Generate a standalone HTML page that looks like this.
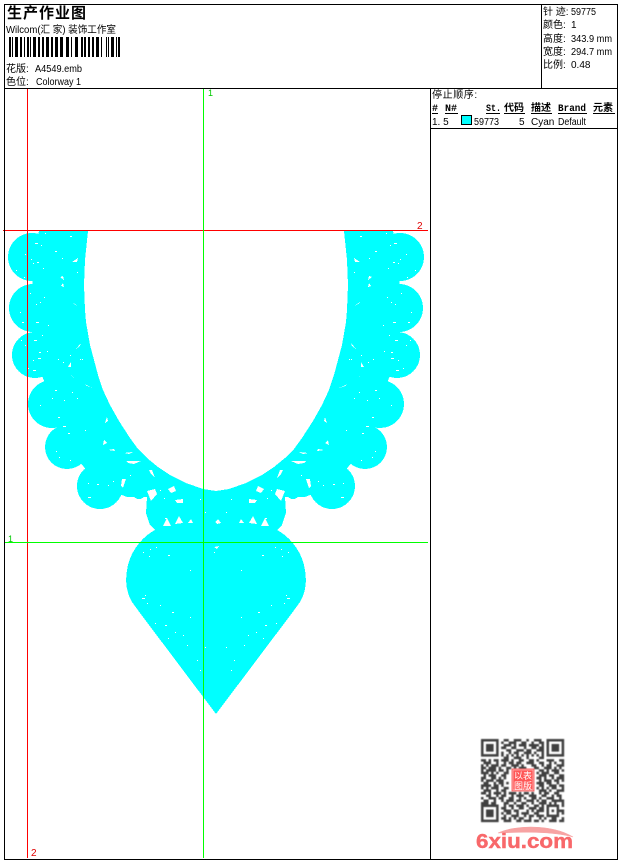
<!DOCTYPE html>
<html><head><meta charset="utf-8"><title>生产作业图</title>
<style>
html,body{margin:0;padding:0;background:#fff;width:620px;height:860px;overflow:hidden}
svg{display:block}
text{font-family:"Liberation Sans","WenQuanYi Zen Hei","Noto Sans CJK SC",sans-serif;font-size:10px;fill:#000}
.h{font-weight:bold}
</style></head><body>
<svg width="620" height="860" viewBox="0 0 620 860" xmlns="http://www.w3.org/2000/svg">
<rect width="620" height="860" fill="#fff"/>

<!-- embroidery shape -->
<g fill="#00ffff" shape-rendering="crispEdges">
<circle cx="32" cy="257" r="24"/><circle cx="33" cy="308" r="24"/><circle cx="35" cy="355" r="23"/>
<circle cx="52" cy="404" r="24"/><circle cx="67" cy="447" r="22"/><circle cx="100" cy="486" r="23"/>
<circle cx="400" cy="257" r="24"/><circle cx="399" cy="308" r="24"/><circle cx="397" cy="355" r="23"/>
<circle cx="380" cy="404" r="24"/><circle cx="365" cy="447" r="22"/><circle cx="332" cy="486" r="23"/>
<circle cx="139" cy="492" r="7"/><circle cx="293" cy="492" r="7"/>
<path d="M39 231H88L85 260L84 285L85 310L86 322L90 345L98 375L103 390L110 405L119 421L130 438L138 449L147 458L158 467L170 475L186 483L203 489L216 491L229 489L246 483L262 475L274 467L285 458L294 449L302 438L313 421L322 405L329 390L334 375L342 345L346 322L347 310L348 285L347 260L344 231H393L400 257L399 308L397 355L380 404L365 447L332 486L305 497L285 497L286 513L282 525L277 530C287 535 300 548 304 565C307 578 307 590 300 602L292 613L216 714L140 613L132 602C125 590 125 578 128 565C132 548 145 535 155 530L150 525L146 513L147 497L127 497L100 486L67 447L52 404L35 355L33 308L32 257Z"/>
</g>
<!-- holes, left half and mirrored -->
<g fill="#fff" shape-rendering="crispEdges">
<path d="M72 262L78 258L77 262ZM60 277L63 276L64 280ZM61 286L64 287L63 283ZM72 302L78 306L74 304ZM76 349L81 343L80 346ZM68 367L71 362L71 367ZM70 375L75 378L72 376ZM84 384L93 388L87 386ZM105 423L107 417L108 421ZM103 445L104 440L107 443ZM108 450L114 449L115 451ZM124 453L133 452L129 454ZM126 461L141 461L134 464L128 463ZM149 470L152 470L155 478L151 474ZM122 479L126 479L123 488L121 486ZM147 491L155 489L157 494L151 501L149 496ZM168 489L174 486L176 491L171 493ZM175 500L183 499L183 503L177 503ZM163 526L167 518L171 526ZM175 524L179 516L183 523ZM188 523L191 519L193 523Z"/>
<g transform="matrix(-1 0 0 1 432 0)"><path d="M72 262L78 258L77 262ZM60 277L63 276L64 280ZM61 286L64 287L63 283ZM72 302L78 306L74 304ZM76 349L81 343L80 346ZM68 367L71 362L71 367ZM70 375L75 378L72 376ZM84 384L93 388L87 386ZM105 423L107 417L108 421ZM103 445L104 440L107 443ZM108 450L114 449L115 451ZM124 453L133 452L129 454ZM126 461L141 461L134 464L128 463ZM149 470L152 470L155 478L151 474ZM122 479L126 479L123 488L121 486ZM147 491L155 489L157 494L151 501L149 496ZM168 489L174 486L176 491L171 493ZM175 500L183 499L183 503L177 503ZM163 526L167 518L171 526ZM175 524L179 516L183 523ZM188 523L191 519L193 523Z"/></g>
<path d="M215 522L218 519L221 523L217 524ZM214 547L219 546L217 549Z"/>
</g>
<!-- speckles -->
<g stroke="#fff" stroke-width="1" fill="none" shape-rendering="crispEdges">
<path d="M45 233.5h1M70 236.5h2M35 243.5h3M41 245.5h1M55 251.5h2M25 254.5h1M31 259.5h1M37 262.5h2M62 258.5h1M33 263.5h1M43 268.5h1M77 272.5h1M24 277.5h1M16 270.5h1M30 293.5h1M36 304.5h1M44 297.5h1M40 302.5h1M20 312.5h1M22 322.5h2M36 322.5h3M48 325.5h1M42 335.5h1M34 340.5h3M21 340.5h1M25 345.5h1M39 352.5h2M47 351.5h1M38 358.5h3M33 360.5h1M58 359.5h1M63 362.5h1M80 359.5h1M70 355.5h1M82 359.5h1M28 368.5h1M33 370.5h3M55 390.5h2M52 398.5h1M40 405.5h1M72 392.5h1M64 400.5h1M77 398.5h1M58 417.5h2M63 426.5h3M68 433.5h2M85 430.5h1M56 451.5h1M59 457.5h1M70 460.5h1M88 483.5h1M97 484.5h2M88 497.5h3M108 485.5h1M113 481.5h1M130 475.5h1M160 490.5h1M164 498.5h1M205 512.5h1M165 518.5h2M200 499.5h1M214 552.5h1M143 552.5h1M150 549.5h1M156 547.5h1M149 556.5h1M168 555.5h2M190 570.5h1M145 595.5h1M142 598.5h3M147 603.5h1M160 605.5h1M172 612.5h2M135 607.5h1M190 617.5h1M155 623.5h1M168 638.5h1M175 632.5h1M187 645.5h1M197 660.5h1M200 670.5h1M205 647.5h1M183 635.5h1M165 625.5h2"/>
<g transform="matrix(-1 0 0 1 432 0)"><path d="M45 233.5h1M70 236.5h2M35 243.5h3M41 245.5h1M55 251.5h2M25 254.5h1M31 259.5h1M37 262.5h2M62 258.5h1M33 263.5h1M43 268.5h1M77 272.5h1M24 277.5h1M16 270.5h1M30 293.5h1M36 304.5h1M44 297.5h1M40 302.5h1M20 312.5h1M22 322.5h2M36 322.5h3M48 325.5h1M42 335.5h1M34 340.5h3M21 340.5h1M25 345.5h1M39 352.5h2M47 351.5h1M38 358.5h3M33 360.5h1M58 359.5h1M63 362.5h1M80 359.5h1M70 355.5h1M82 359.5h1M28 368.5h1M33 370.5h3M55 390.5h2M52 398.5h1M40 405.5h1M72 392.5h1M64 400.5h1M77 398.5h1M58 417.5h2M63 426.5h3M68 433.5h2M85 430.5h1M56 451.5h1M59 457.5h1M70 460.5h1M88 483.5h1M97 484.5h2M88 497.5h3M108 485.5h1M113 481.5h1M130 475.5h1M160 490.5h1M164 498.5h1M205 512.5h1M165 518.5h2M200 499.5h1M143 552.5h1M150 549.5h1M156 547.5h1M149 556.5h1M168 555.5h2M190 570.5h1M145 595.5h1M142 598.5h3M147 603.5h1M160 605.5h1M172 612.5h2M135 607.5h1M190 617.5h1M155 623.5h1M168 638.5h1M175 632.5h1M187 645.5h1M197 660.5h1M200 670.5h1M205 647.5h1M183 635.5h1M165 625.5h2"/></g>
</g>

<!-- guide lines -->
<g shape-rendering="crispEdges" stroke-width="1" fill="none">
<path stroke="#ff0000" d="M3 230.5H428M27.5 89V858"/>
<path stroke="#00ff00" d="M5 542.5H428M203.5 89V858"/>
</g>
<text x="208" y="96" style="fill:#00c800;font-size:9px">1</text>
<text x="8" y="542" style="fill:#00c800;font-size:9px">1</text>
<text x="417" y="229" style="fill:#e00000;font-size:10px">2</text>
<text x="31" y="856" style="fill:#e00000;font-size:10px">2</text>

<!-- frame -->
<g stroke="#000" stroke-width="1" fill="none" shape-rendering="crispEdges">
<path d="M4.5 4.5H617.5V859.5H4.5ZM5 88.5H617M541.5 5V88M430.5 89V859M431 128.5H617"/>
</g>

<!-- header left -->
<text x="7" y="18" class="h" style="font-size:15px;letter-spacing:1px">生产作业图</text>
<text x="6" y="33" textLength="110" lengthAdjust="spacingAndGlyphs" style="font-size:10px">Wilcom(汇 家) 装饰工作室</text>
<path shape-rendering="crispEdges" fill="#000" d="M9 37h2v20h-2zM12 37h1v20h-1zM15 37h3v20h-3zM20 37h2v20h-2zM24 37h1v20h-1zM27 37h2v20h-2zM30 37h1v20h-1zM33 37h3v20h-3zM38 37h2v20h-2zM42 37h2v20h-2zM46 37h3v20h-3zM51 37h2v20h-2zM55 37h3v20h-3zM60 37h3v20h-3zM66 37h3v20h-3zM71 37h1v20h-1zM75 37h3v20h-3zM81 37h2v20h-2zM84 37h2v20h-2zM88 37h2v20h-2zM92 37h2v20h-2zM96 37h3v20h-3zM101 37h1v20h-1zM106 37h1v20h-1zM108 37h1v20h-1zM111 37h3v20h-3zM116 37h1v20h-1zM118 37h2v20h-2z"/>
<text x="6" y="72">花版:</text><text x="35" y="72" textLength="47" lengthAdjust="spacingAndGlyphs">A4549.emb</text>
<text x="6" y="85">色位:</text><text x="36" y="85" textLength="45" lengthAdjust="spacingAndGlyphs">Colorway 1</text>

<!-- header right -->
<text x="543" y="15">针 迹:</text><text x="571" y="15" textLength="25" lengthAdjust="spacingAndGlyphs">59775</text>
<text x="543" y="28">颜色:</text><text x="571" y="28">1</text>
<text x="543" y="42">高度:</text><text x="571" y="42" textLength="41" lengthAdjust="spacingAndGlyphs">343.9 mm</text>
<text x="543" y="55">宽度:</text><text x="571" y="55" textLength="41" lengthAdjust="spacingAndGlyphs">294.7 mm</text>
<text x="543" y="68">比例:</text><text x="571" y="68">0.48</text>

<!-- stop sequence -->
<text x="432" y="98" style="letter-spacing:.6px">停止顺序:</text>
<text x="432" y="111" class="h" style="font-family:'Liberation Mono','WenQuanYi Zen Hei',monospace">#</text>
<text x="445" y="111" class="h" style="font-family:'Liberation Mono','WenQuanYi Zen Hei',monospace">N#</text>
<text x="486" y="111" class="h" textLength="15" lengthAdjust="spacingAndGlyphs" style="font-family:'Liberation Mono','WenQuanYi Zen Hei',monospace">St.</text>
<text x="504" y="111" class="h">代码</text>
<text x="531" y="111" class="h">描述</text>
<text x="558" y="111" class="h" textLength="28" lengthAdjust="spacingAndGlyphs" style="font-family:'Liberation Mono',monospace">Brand</text>
<text x="593" y="111" class="h">元素</text>
<path stroke="#000" shape-rendering="crispEdges" d="M432 113.5h6M445 113.5h13M486 113.5h14M504 113.5h21M531 113.5h21M558 113.5h29M593 113.5h22"/>
<text x="432" y="125">1. 5</text>
<rect x="461.5" y="115.5" width="10" height="9" fill="#00ffff" stroke="#000" shape-rendering="crispEdges"/>
<text x="474" y="125" textLength="25" lengthAdjust="spacingAndGlyphs">59773</text>
<text x="519" y="125">5</text>
<text x="531" y="125">Cyan</text>
<text x="558" y="125" textLength="28" lengthAdjust="spacingAndGlyphs">Default</text>

<!-- QR -->
<defs><filter id="b" x="-5%" y="-5%" width="110%" height="110%"><feGaussianBlur stdDeviation=".5"/></filter></defs>
<g filter="url(#b)">
<g transform="translate(481 739) scale(2.52)" fill="none" stroke="#404040" stroke-width="1">
<path d="M.5 .5h6v6h-6zM26.5 .5h6v6h-6zM.5 26.5h6v6h-6z"/>
<path fill="#404040" stroke="none" d="M2 2h3v3h-3zM28 2h3v3h-3zM2 28h3v3h-3z"/>
<path d="M9 .5h2M13 .5h3M18 .5h1M21 .5h3M8 1.5h1M11 1.5h3M16 1.5h2M20 1.5h1M23 1.5h2M9 2.5h3M13 2.5h1M15 2.5h3M19 2.5h4M24 2.5h1M8 3.5h2M12 3.5h2M17 3.5h1M20 3.5h2M23 3.5h2M10 4.5h2M14 4.5h3M18 4.5h2M22 4.5h3M8 5.5h1M11 5.5h1M13 5.5h2M17 5.5h3M21 5.5h1M24 5.5h1M8 6.5h1M10 6.5h1M12 6.5h1M14 6.5h1M16 6.5h1M18 6.5h1M20 6.5h1M22 6.5h1M24 6.5h1M9 7.5h2M13 7.5h3M18 7.5h1M23 7.5h2
M0 8.5h2M3 8.5h1M5 8.5h2M8 8.5h3M12 8.5h1M15 8.5h2M19 8.5h2M22 8.5h1M26 8.5h3M31 8.5h2M1 9.5h3M6 9.5h1M9 9.5h1M11 9.5h2M14 9.5h2M18 9.5h3M23 9.5h2M27 9.5h1M29 9.5h1M32 9.5h1M0 10.5h1M2 10.5h1M4 10.5h3M8 10.5h2M12 10.5h3M16 10.5h1M20 10.5h2M24 10.5h1M26 10.5h2M30 10.5h3M0 11.5h2M3 11.5h3M7 11.5h1M10 11.5h2M13 11.5h1M15 11.5h3M21 11.5h2M25 11.5h3M29 11.5h1M31 11.5h1
M0 12.5h1M2 12.5h4M7 12.5h2M10 12.5h1M23 12.5h2M26 12.5h1M28 12.5h3M32 12.5h1M0 13.5h3M4 13.5h1M6 13.5h1M9 13.5h2M22 13.5h1M24 13.5h3M29 13.5h2M1 14.5h1M3 14.5h3M8 14.5h2M23 14.5h3M27 14.5h2M31 14.5h2M0 15.5h2M4 15.5h2M7 15.5h1M9 15.5h1M22 15.5h2M25 15.5h1M28 15.5h1M30 15.5h3M0 16.5h1M2 16.5h3M6 16.5h3M23 16.5h1M25 16.5h3M29 16.5h2M32 16.5h1M1 17.5h2M5 17.5h1M7 17.5h2M10 17.5h1M22 17.5h3M26 17.5h2M30 17.5h1M0 18.5h4M5 18.5h2M8 18.5h1M23 18.5h2M27 18.5h3M31 18.5h2M0 19.5h1M2 19.5h1M4 19.5h3M9 19.5h2M22 19.5h1M24 19.5h1M26 19.5h1M28 19.5h2M32 19.5h1M1 20.5h3M6 20.5h1M8 20.5h2M23 20.5h3M27 20.5h1M30 20.5h3
M0 21.5h2M3 21.5h1M5 21.5h3M9 21.5h1M11 21.5h3M15 21.5h1M17 21.5h2M20 21.5h1M23 21.5h1M25 21.5h2M29 21.5h2M2 22.5h2M6 22.5h1M8 22.5h2M12 22.5h1M14 22.5h3M19 22.5h3M24 22.5h2M28 22.5h1M30 22.5h2M0 23.5h1M3 23.5h3M7 23.5h2M11 23.5h2M15 23.5h1M17 23.5h1M20 23.5h2M23 23.5h1M26 23.5h3M31 23.5h1M1 24.5h2M5 24.5h1M8 24.5h1M10 24.5h3M14 24.5h2M18 24.5h3M22 24.5h1M24 24.5h2M28 24.5h5M0 25.5h3M4 25.5h2M9 25.5h2M13 25.5h1M16 25.5h2M20 25.5h1M23 25.5h3M27 25.5h1M29 25.5h1M32 25.5h1
M9 26.5h1M11 26.5h2M14 26.5h3M18 26.5h1M21 26.5h2M24 26.5h1M26 26.5h5M32 26.5h1M8 27.5h2M12 27.5h1M15 27.5h2M19 27.5h3M23 27.5h2M26 27.5h1M30 27.5h1M9 28.5h3M13 28.5h2M18 28.5h1M20 28.5h1M22 28.5h3M26 28.5h1M28 28.5h1M30 28.5h3M8 29.5h1M10 29.5h2M14 29.5h1M16 29.5h3M21 29.5h2M26 29.5h1M30 29.5h1M32 29.5h1M9 30.5h1M12 30.5h3M17 30.5h1M19 30.5h2M22 30.5h3M26 30.5h5M8 31.5h2M11 31.5h1M13 31.5h1M15 31.5h2M19 31.5h1M23 31.5h1M25 31.5h1M28 31.5h2M32 31.5h1M9 32.5h3M14 32.5h2M17 32.5h3M21 32.5h2M24 32.5h1M27 32.5h3M31 32.5h2"/>
</g>
</g>
<!-- seal -->
<rect x="511.5" y="768.5" width="23" height="23" fill="#f96a6a"/>
<rect x="513" y="770" width="20" height="20" fill="#f55" stroke="#ffc8c8" stroke-width=".6"/>
<text x="514" y="779" style="font-size:9px;fill:#fff">以</text>
<text x="523" y="779" style="font-size:9px;fill:#fff">表</text>
<text x="514" y="789" style="font-size:9px;fill:#fff">图</text>
<text x="523" y="789" style="font-size:9px;fill:#fff">版</text>

<!-- logo -->
<path d="M498 833C515 825 552 824 573 837C552 831 520 832 498 833Z" fill="#f7a3a3" stroke="#f7a3a3" stroke-width=".6"/>
<text x="476" y="848" textLength="97" lengthAdjust="spacingAndGlyphs" style="font-size:20px;font-weight:bold;fill:#f8686a;stroke:#f8686a;stroke-width:.4;font-family:'Liberation Sans',sans-serif">6xiu.com</text>
</svg>
</body></html>
